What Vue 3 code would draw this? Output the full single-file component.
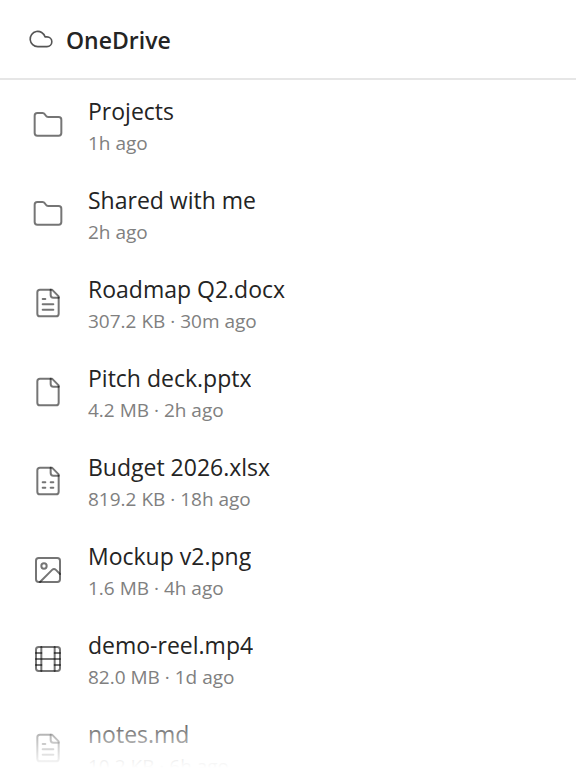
<template>
  <main class="drive">
    <header class="drive-head">
      <svg class="cloud" viewBox="0 0 24 24" aria-hidden="true">
        <path d="M17.5 19H9a7 7 0 1 1 6.71-9h1.79a4.5 4.5 0 1 1 0 9Z" />
      </svg>
      <h1>OneDrive</h1>
    </header>

    <ul class="files">
      <li v-for="f in files" :key="f.name">
        <button type="button" class="file">
          <svg class="icon" viewBox="0 0 24 24" aria-hidden="true">
            <path v-for="d in icons[f.icon]" :key="d" :d="d" />
          </svg>
          <span class="text">
            <span class="name">{{ f.name }}</span>
            <span class="meta">{{ f.size ? `${f.size} · ${f.modified}` : f.modified }}</span>
          </span>
        </button>
      </li>
    </ul>

    <div class="fade"></div>
  </main>
</template>

<script setup>
const page = [
  'M15 2H6a2 2 0 0 0-2 2v16a2 2 0 0 0 2 2h12a2 2 0 0 0 2-2V7Z',
  'M14 2v4a2 2 0 0 0 2 2h4',
];
const frame = 'M5 3h14a2 2 0 0 1 2 2v14a2 2 0 0 1-2 2H5a2 2 0 0 1-2-2V5a2 2 0 0 1 2-2Z';

const icons = {
  folder: [
    'M20 20a2 2 0 0 0 2-2V8a2 2 0 0 0-2-2h-7.9a2 2 0 0 1-1.69-.9L9.6 3.9A2 2 0 0 0 7.93 3H4a2 2 0 0 0-2 2v13a2 2 0 0 0 2 2Z',
  ],
  file: page,
  text: [...page, 'M10 9H8', 'M16 13H8', 'M16 17H8'],
  sheet: [...page, 'M8 13h2', 'M14 13h2', 'M8 17h2', 'M14 17h2'],
  image: [
    frame,
    'M11 9a2 2 0 1 1-4 0a2 2 0 1 1 4 0Z',
    'm21 15-3.086-3.086a2 2 0 0 0-2.828 0L6 21',
  ],
  film: [
    frame, 'M7 3v18', 'M3 7.5h4', 'M3 12h18', 'M3 16.5h4', 'M17 3v18', 'M17 7.5h4', 'M17 16.5h4',
  ],
};

const files = [
  { name: 'Projects', icon: 'folder', modified: '1h ago' },
  { name: 'Shared with me', icon: 'folder', modified: '2h ago' },
  { name: 'Roadmap Q2.docx', icon: 'text', size: '307.2 KB', modified: '30m ago' },
  { name: 'Pitch deck.pptx', icon: 'file', size: '4.2 MB', modified: '2h ago' },
  { name: 'Budget 2026.xlsx', icon: 'sheet', size: '819.2 KB', modified: '18h ago' },
  { name: 'Mockup v2.png', icon: 'image', size: '1.6 MB', modified: '4h ago' },
  { name: 'demo-reel.mp4', icon: 'film', size: '82.0 MB', modified: '1d ago' },
  { name: 'notes.md', icon: 'text', size: '10.2 KB', modified: '6h ago' },
];
</script>

<style>
body{ background:#fff; }
</style>

<style scoped>
.drive{
  position:relative; display:flex; flex-direction:column; height:100vh; overflow:hidden;
  background:#fff; color:#242424; font-family:"Segoe UI", "Open Sans", "Noto Sans", sans-serif;
}
.drive-head{
  display:flex; align-items:flex-start; gap:12px; flex:none;
  padding:22px 28px 20px; border-bottom:2px solid #e6e6e6;
}
.drive-head h1{ margin:0; font-size:23px; line-height:36px; font-weight:600; }
svg{ flex:none; fill:none; stroke-width:1.5; stroke-linecap:round; stroke-linejoin:round; }
.cloud{ width:26px; height:26px; margin-top:4px; stroke:#555; }
.files{ list-style:none; margin:0; padding:0; }
.file{
  display:flex; align-items:center; gap:24px; width:100%; padding:13px 32px 12px;
  border:0; background:none; color:inherit; font:inherit; text-align:left; cursor:pointer;
}
.file:hover{ background:#f7f7f7; }
.icon{ width:32px; height:32px; stroke:rgba(0,0,0,.54); }
.text{ display:flex; flex-direction:column; min-width:0; }
.name{ font-size:23px; line-height:36px; overflow:hidden; text-overflow:ellipsis; white-space:nowrap; }
.meta{ font-size:19px; line-height:28px; color:#808080; }
.fade{
  position:absolute; left:0; right:0; bottom:0; height:64px; pointer-events:none;
  background:linear-gradient(to bottom, rgba(255,255,255,0), #fff);
}
</style>
